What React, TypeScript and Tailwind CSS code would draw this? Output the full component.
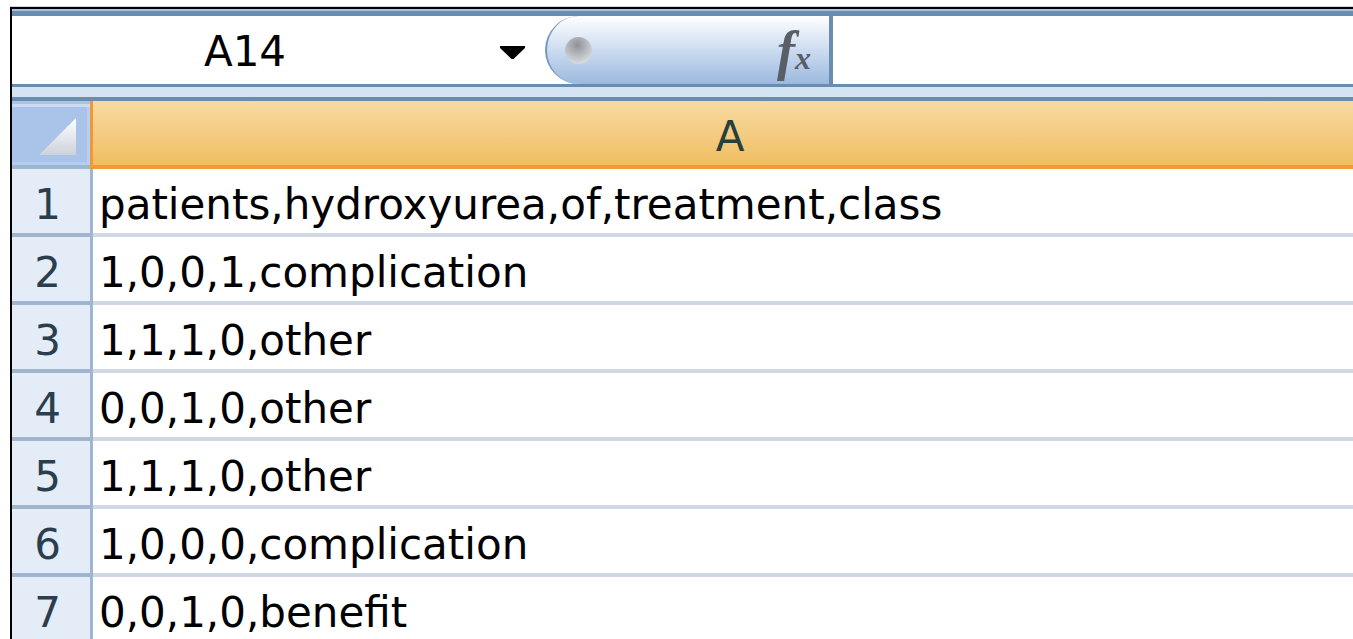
import React from "react";

const rows: string[] = [
  "patients,hydroxyurea,of,treatment,class",
  "1,0,0,1,complication",
  "1,1,1,0,other",
  "0,0,1,0,other",
  "1,1,1,0,other",
  "1,0,0,0,complication",
  "0,0,1,0,benefit",
];

function FormulaBar() {
  return (
    <div className="flex h-[68px]">
      {/* Name box */}
      <div className="flex w-[533px] shrink-0 items-start bg-white">
        <div className="w-[466px] pt-[15px] text-center leading-none text-black">A14</div>
        <svg className="ml-[22px] mt-[30px]" width="25" height="13" viewBox="0 0 25 13">
          <polygon points="0,0 25,0 25,2 13.5,13 11.5,13 0,2" fill="#000" />
        </svg>
      </div>
      {/* Insert function button */}
      <div className="flex h-full w-[284px] shrink-0 items-center rounded-l-[34px] border-l-2 border-[#7897bb] bg-linear-to-b from-white to-[#9bb9df]">
        <div className="ml-[18px] h-[27px] w-[27px] rounded-full bg-[radial-gradient(circle_at_45%_30%,#8e9196_0%,#b9bcc0_45%,#eef0f3_100%)]" />
        <div className="ml-auto mr-[18px] flex items-baseline pt-[2px] font-['Liberation_Serif',serif] font-bold italic leading-none text-[#5a5e66]">
          <span className="text-[54px]">f</span>
          <span className="text-[32px]">x</span>
        </div>
      </div>
      <div className="w-[4px] shrink-0 bg-[#6a8caf]" />
      <div className="flex-1 bg-white" />
    </div>
  );
}

function HeaderRow() {
  return (
    <div className="flex h-[68px]">
      {/* Select-all corner */}
      <div className="flex w-[78px] shrink-0 flex-col">
        <div className="flex h-[64px] flex-col bg-[#a9c4e8] pt-[3px]">
          <div className="h-[3px] bg-[#cddbf1]" />
          <div className="flex flex-1">
            <div className="flex flex-1 flex-col">
              <div className="flex flex-1 items-end justify-end pb-[7px] pr-[11px]">
                <svg width="37" height="37" viewBox="0 0 37 37">
                  <defs>
                    <linearGradient id="cornerTri" x1="0" y1="0" x2="0" y2="1">
                      <stop offset="0" stopColor="#ffffff" />
                      <stop offset="1" stopColor="#cdd2da" />
                    </linearGradient>
                  </defs>
                  <polygon points="37,0 37,37 0,37" fill="url(#cornerTri)" />
                </svg>
              </div>
              <div className="h-[3px] bg-[#b3cef4]" />
            </div>
            <div className="w-[3px] bg-[#b7d0f1]" />
          </div>
        </div>
        <div className="h-[4px] bg-[#9fb6cf]" />
      </div>
      <div className="w-[3px] shrink-0 bg-[#f0993a]" />
      {/* Column A */}
      <div className="flex flex-1 flex-col overflow-hidden">
        <div className="h-[64px] bg-linear-to-b from-[#f8daa2] to-[#efbe60]">
          <div className="w-[1274px] shrink-0 pt-[15px] text-center leading-none text-[#27403d]">A</div>
        </div>
        <div className="h-[4px] bg-[#f0993a]" />
      </div>
    </div>
  );
}

function DataRow({ n, text }: { n: number; text: string }) {
  return (
    <div className="flex h-[68px] shrink-0">
      <div className="flex w-[78px] shrink-0 flex-col">
        <div className="h-[64px] bg-[#e4ecf7] pr-[7px] pt-[15px] text-center leading-none text-[#2b3e4e]">{n}</div>
        <div className="h-[4px] bg-[#a0b5ce]" />
      </div>
      <div className="w-[3px] shrink-0 bg-[#9fb6cf]" />
      <div className="flex flex-1 flex-col overflow-hidden">
        <div className="h-[64px] whitespace-nowrap bg-white pl-[6px] pt-[15px] leading-none text-black">{text}</div>
        <div className="h-[4px] bg-[#d0d7e5]" />
      </div>
    </div>
  );
}

export default function App() {
  return (
    <div className="h-[639px] w-[1353px] overflow-hidden bg-white font-['DejaVu_Sans',sans-serif] text-[42px]">
      <div className="h-[6px]" />
      <div className="ml-[10px] h-[1px] bg-[#d4d4d4]" />
      <div className="ml-[10px] flex flex-col border-l-2 border-t-2 border-black">
        <div className="h-[2px] bg-[#a9c1de]" />
        <div className="h-[5px] bg-[#6a8caf]" />
        <FormulaBar />
        <div className="h-[3px] bg-[#6a8caf]" />
        <div className="h-[10px] bg-[#d5e4f3]" />
        <div className="h-[4px] bg-[#6a8caf]" />
        <HeaderRow />
        {rows.map((t, i) => (
          <DataRow key={i} n={i + 1} text={t} />
        ))}
      </div>
    </div>
  );
}
